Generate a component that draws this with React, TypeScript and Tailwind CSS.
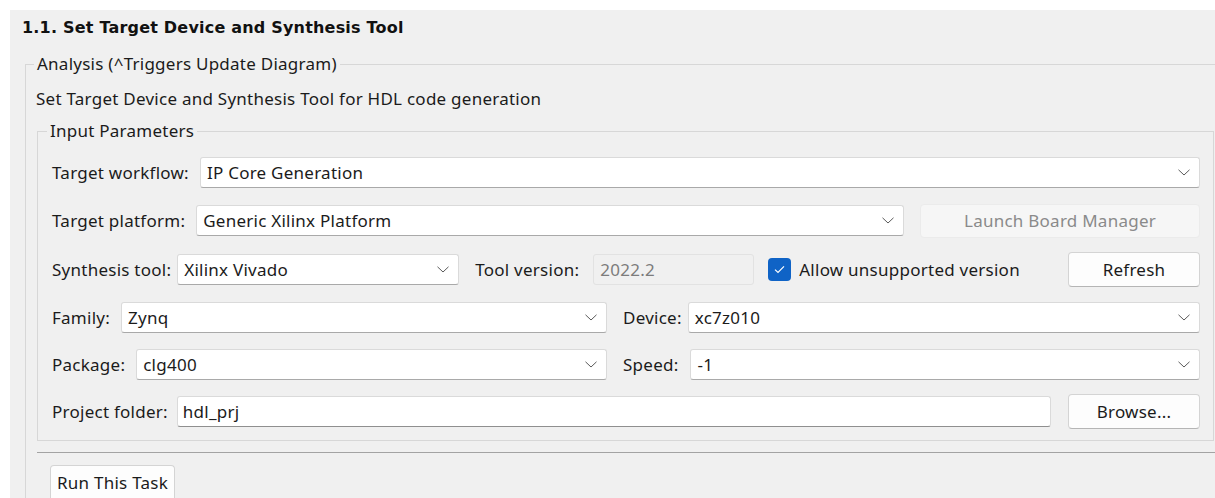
import type { ReactNode } from "react";

const uiFont = { fontFamily: '"Noto Sans", "Open Sans", sans-serif' };

function Chevron() {
    return (
        <svg width="12" height="7" viewBox="0 0 12 7" className="shrink-0">
            <path d="M0.5 0.8 L6 6 L11.5 0.8" fill="none" stroke="#5a5a5a" strokeWidth="1" />
        </svg>
    );
}

function Select({ value, className = "" }: { value: string; className?: string }) {
    return (
        <div
            className={`flex h-[31px] items-center justify-between rounded-[3px] border border-[#dadada] border-b-[#a9a9a9] bg-white pl-[6px] pr-[9px] text-[#1b1b1b] ${className}`}
        >
            <span className="whitespace-nowrap">{value}</span>
            <Chevron />
        </div>
    );
}

function TextBox({ value, className = "" }: { value: string; className?: string }) {
    return (
        <div
            className={`flex h-[31px] items-center rounded-[3px] border border-[#dadada] border-b-[#8f8f8f] bg-white pl-[5px] text-[#1b1b1b] ${className}`}
        >
            {value}
        </div>
    );
}

function PushButton({ children, className = "", disabled = false }: { children: ReactNode; className?: string; disabled?: boolean }) {
    return (
        <button
            type="button"
            disabled={disabled}
            className={
                disabled
                    ? `flex h-[34px] items-center justify-center rounded-[4px] border border-[#ebebeb] bg-[#f6f6f6] text-[#8a8a8a] ${className}`
                    : `flex h-[35px] items-center justify-center rounded-[4px] border border-[#d4d4d4] border-b-[#b5b5b5] bg-[#fdfdfd] text-[#1b1b1b] ${className}`
            }
        >
            {children}
        </button>
    );
}

function Label({ children }: { children: ReactNode }) {
    return <span className="shrink-0 whitespace-nowrap text-[#1b1b1b]">{children}</span>;
}

export default function App() {
    return (
        <div className="min-h-[498px] bg-white pl-[10px] pt-[10px]" style={uiFont}>
            <div className="h-[488px] overflow-hidden bg-[#f0f0f0] text-[17px] leading-[20px] tracking-[0.25px]">
                <div
                    className="pl-[12px] pt-[8px] text-[16px] font-bold leading-[20px] tracking-[0.2px] text-[#111]"
                    style={{ fontFamily: '"DejaVu Sans", sans-serif' }}
                >
                    1.1. Set Target Device and Synthesis Tool
                </div>

                {/* Analysis group: only top and left edges are visible */}
                <fieldset className="ml-[15px] mt-[16px] border-l border-t border-[#d7d7d7] pl-[8px]">
                    <legend className="px-[3px] text-[#1b1b1b]">Analysis (^Triggers Update Diagram)</legend>

                    <div className="ml-[2px] mt-[15px] text-[#1b1b1b]">
                        Set Target Device and Synthesis Tool for HDL code generation
                    </div>

                    <fieldset className="ml-[3px] mr-[1px] mt-[12px] border border-[#d7d7d7] pb-[13px] pl-[14px] pr-[13px]">
                        <legend className="-ml-[5px] px-[3px] text-[#1b1b1b]">Input Parameters</legend>

                        <div className="mt-[16px] flex h-[31px] items-center gap-[11px]">
                            <Label>Target workflow:</Label>
                            <Select value="IP Core Generation" className="flex-1" />
                        </div>

                        <div className="mt-[17px] flex h-[31px] items-center">
                            <Label>Target platform:</Label>
                            <Select value="Generic Xilinx Platform" className="ml-[11px] flex-1" />
                            <PushButton disabled className="ml-[16px] w-[280px]">
                                Launch Board Manager
                            </PushButton>
                        </div>

                        <div className="mt-[18px] flex h-[31px] items-center">
                            <Label>Synthesis tool:</Label>
                            <Select value="Xilinx Vivado" className="ml-[6px] w-[282px]" />
                            <span className="ml-[16px]">
                                <Label>Tool version:</Label>
                            </span>
                            <div className="ml-[14px] flex h-[31px] w-[161px] items-center rounded-[3px] border border-[#e2e2e2] bg-[#f0f0f0] pl-[6px] text-[#7c7c7c]">
                                2022.2
                            </div>
                            <div className="ml-[14px] flex h-[23px] w-[23px] shrink-0 items-center justify-center rounded-[4px] bg-[#0f63c6]">
                                <svg width="11" height="9" viewBox="0 0 11 9">
                                    <path d="M1 4.6 L4 7.5 L10 1.3" fill="none" stroke="#fff" strokeWidth="1.2" />
                                </svg>
                            </div>
                            <span className="ml-[8px]">
                                <Label>Allow unsupported version</Label>
                            </span>
                            <PushButton className="ml-auto w-[132px]">Refresh</PushButton>
                        </div>

                        <div className="mt-[17px] grid h-[31px] grid-cols-[555px_1fr] gap-[16px]">
                            <div className="flex items-center gap-[11px]">
                                <Label>Family:</Label>
                                <Select value="Zynq" className="flex-1" />
                            </div>
                            <div className="flex items-center gap-[6px]">
                                <Label>Device:</Label>
                                <Select value="xc7z010" className="flex-1" />
                            </div>
                        </div>

                        <div className="mt-[16px] grid h-[31px] grid-cols-[555px_1fr] gap-[16px]">
                            <div className="flex items-center gap-[11px]">
                                <Label>Package:</Label>
                                <Select value="clg400" className="flex-1" />
                            </div>
                            <div className="flex items-center gap-[12px]">
                                <Label>Speed:</Label>
                                <Select value="-1" className="flex-1" />
                            </div>
                        </div>

                        <div className="mt-[16px] flex h-[31px] items-center">
                            <Label>Project folder:</Label>
                            <TextBox value="hdl_prj" className="ml-[9px] flex-1" />
                            <PushButton className="ml-[17px] w-[132px]">Browse...</PushButton>
                        </div>
                    </fieldset>

                    <div className="ml-[3px] mt-[11px] h-px bg-[#a3a3a3]" />

                    <div className="ml-[16px] mt-[12px] flex">
                        <PushButton className="h-[36px] px-[6px]">Run This Task</PushButton>
                    </div>
                </fieldset>
            </div>
        </div>
    );
}
